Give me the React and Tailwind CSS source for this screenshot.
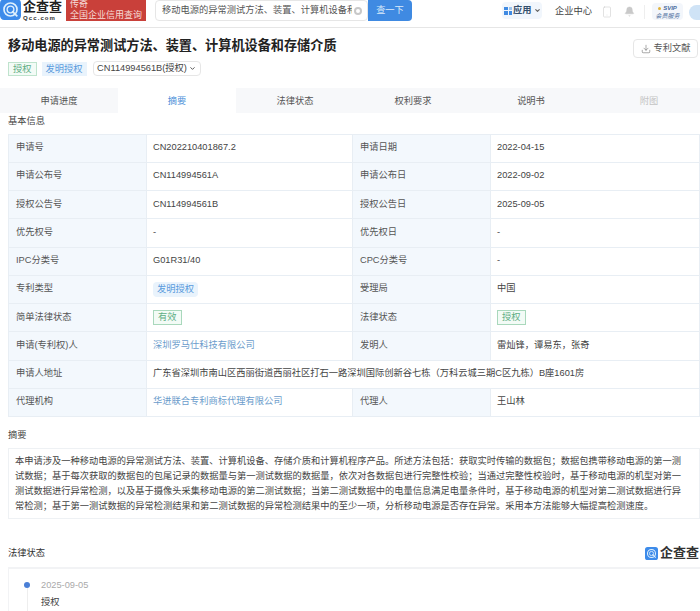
import { Download, Bell, Smartphone, ChevronDown } from "lucide-react";

const CJK = "font-['Liberation_Sans','Noto_Sans_CJK_SC',sans-serif]";

const rows = [
  ["申请号", "CN202210401867.2", "申请日期", "2022-04-15"],
  ["申请公布号", "CN114994561A", "申请公布日", "2022-09-02"],
  ["授权公告号", "CN114994561B", "授权公告日", "2025-09-05"],
  ["优先权号", "-", "优先权日", "-"],
  ["IPC分类号", "G01R31/40", "CPC分类号", "-"],
  ["专利类型", <BlueTag text="发明授权" />, "受理局", "中国"],
  ["简单法律状态", <GreenTag text="有效" />, "法律状态", <GreenTag text="授权" />],
  ["申请(专利权)人", <span className="text-[#6b9ccb]">深圳罗马仕科技有限公司</span>, "发明人", "雷灿锋，谭易东，张奇"],
];

function BlueTag({ text }) {
  return <span className="inline-block rounded-sm bg-[#e9f3fc] px-[4px] leading-[15px] text-[#5a9bdc]">{text}</span>;
}

function GreenTag({ text }) {
  return <span className="inline-block border border-[#a9d8bc] bg-[#f3fbf6] px-[4px] leading-[13px] text-[#5fae84]">{text}</span>;
}

function LogoMark({ size }) {
  return (
    <svg width={size} height={size} viewBox="0 0 20 20">
      <rect width="20" height="20" rx="4" fill="#3d8bea" />
      <circle cx="10" cy="10" r="6.2" fill="none" stroke="#dff0fd" strokeWidth="1.6" />
      <circle cx="10" cy="10" r="3.2" fill="none" stroke="#dff0fd" strokeWidth="1.3" />
      <path d="M11.5 11.5 L16.5 16.5" stroke="#dff0fd" strokeWidth="1.6" />
    </svg>
  );
}

function Label({ children }) {
  return <div className="flex items-center border-r border-b border-[#e8eef4] bg-[#f3f8fd] pl-[7px] text-[#555]">{children}</div>;
}

function Value({ children }) {
  return <div className="flex items-center border-r border-b border-[#e8eef4] pl-[6px] text-[#444]">{children}</div>;
}

const App = () => {
  return (
    <div className={`${CJK} h-[611px] w-[700px] overflow-hidden bg-white text-[9.25px] text-[#333]`}>
      {/* top bar, the page is scrolled a little so it is cut at the top */}
      <div className="flex h-[28px] items-start border-b border-[#e6e6e6]">
        <div className="-mt-[1px] shrink-0"><LogoMark size={21} /></div>
        <div className="ml-[2px] flex w-[42px] shrink-0 flex-col">
          <span className="h-[15px] text-[13px] leading-[14px] font-bold whitespace-nowrap text-[#222]">企查查</span>
          <span className="text-[6px] leading-[6px] font-bold tracking-[1.1px] whitespace-nowrap text-[#333]">Qcc.com</span>
        </div>
        <div className="ml-[1px] h-[21px] w-[80px] shrink-0 overflow-hidden bg-[#c9403a] pl-[4px] text-[9px] whitespace-nowrap text-[#f6dcd8]">
          <div className="h-[9px] leading-[8px]">传奇</div>
          <div className="text-[9px] leading-[13px]">全国企业信用查询</div>
        </div>
        <div className="ml-[9px] flex h-[21px] w-[213px] shrink-0 items-center rounded-sm border border-[#e6e6e6] pl-[6px]">
          <input readOnly value="移动电源的异常测试方法、装置、计算机设备和存储介质" className="w-[190px] text-[#555] outline-none" />
          <span className="ml-[2px] h-[8px] w-[8px] rounded-full border-2 border-[#c8c8c8] bg-white" />
        </div>
        <div className="flex h-[21px] w-[44px] shrink-0 items-center justify-center rounded-r-sm bg-[#3f8ae2] text-[#dbeafa]">查一下</div>
        <div className="mt-[2px] ml-[90px] flex h-[17px] w-[40px] shrink-0 items-center rounded-sm bg-[#f1f6fc] pl-[2px] font-bold whitespace-nowrap text-[#35506e]">
          <span className="grid h-[8px] w-[8px] shrink-0 grid-cols-2 gap-px">
            <i className="bg-[#3f8ae2]" /><i className="bg-[#9cc4ee]" /><i className="bg-[#3f8ae2]" /><i className="bg-[#3f8ae2]" />
          </span>
          <span className="ml-[1px]">应用</span>
          <ChevronDown size={7} strokeWidth={4} className="ml-[2px] text-[#666]" />
        </div>
        <span className="mt-[5px] ml-[13px] whitespace-nowrap text-[#444]">企业中心</span>
        <Smartphone size={12} strokeWidth={1} className="mt-[6px] ml-[9px] shrink-0 text-[#c4c4c4]" />
        <Bell size={11} fill="#c9c9c9" strokeWidth={1} className="mt-[6px] ml-[11px] shrink-0 text-[#c9c9c9]" />
        <span className="mt-[5px] ml-[9px] h-[14px] w-px shrink-0 bg-[#eee]" />
        <div className="mt-[3px] ml-[7px] h-[17px] w-[31px] shrink-0 rounded-sm bg-[#f3f6fb] pt-[1px] text-center text-[6px] leading-[8px] whitespace-nowrap text-[#4a6da0] italic">
          <div className="flex items-center justify-center font-bold">
            <span className="mr-[2px] h-[3px] w-[3px] rounded-full bg-[#e0b23c]" />
            SVIP
          </div>
          <div>会员服务</div>
        </div>
        <span className="mt-[5px] ml-[6px] h-[15px] w-[18px] shrink-0 rounded-full bg-[#cfe3f6]" />
      </div>

      {/* title */}
      <div className="flex h-[60px] items-start justify-between pr-[2px] pl-2">
        <div>
          <h1 className="mt-[8px] text-[13.15px] leading-[20px] font-bold text-[#222]">移动电源的异常测试方法、装置、计算机设备和存储介质</h1>
          <div className="mt-[5px] flex items-center">
            <span className="border border-[#bfe3cd] bg-[#f3fbf6] px-[4px] leading-[12px] text-[#5fae84]">授权</span>
            <span className="ml-[5px] bg-[#e9f3fc] px-[4px] leading-[14px] text-[#5a9bdc]">发明授权</span>
            <span className="ml-[6px] flex h-[15px] w-[108px] items-center justify-center rounded-sm border border-[#e6e6e6] whitespace-nowrap text-[#444]">
              CN114994561B(授权)
              <ChevronDown size={7} strokeWidth={3} className="ml-[2px] shrink-0" />
            </span>
          </div>
        </div>
        <div className="mt-[11px] flex h-[19px] w-[65px] items-center justify-center rounded-sm border border-[#e6e6e6] whitespace-nowrap text-[#555]">
          <Download size={10} strokeWidth={1.2} className="mr-[3px] shrink-0" />
          专利文献
        </div>
      </div>

      {/* tabs */}
      <div className="grid h-[25px] grid-cols-[repeat(6,118px)] bg-[#f7f8fa] text-center leading-[27px] text-[#555]">
        <div>申请进度</div>
        <div className="bg-white text-[#4a90d9]">摘要</div>
        <div>法律状态</div>
        <div>权利要求</div>
        <div>说明书</div>
        <div className="text-[#c4c4c4]">附图</div>
      </div>

      <div className="mt-[2px] pl-2 leading-[13px] text-[#444]">基本信息</div>

      {/* basic info table */}
      <div className="mt-[5.5px] ml-2 grid w-[692px] auto-rows-[28.25px] grid-cols-[138px_206px_138px_209px] border-t border-l border-[#e8eef4]">
        {rows.map((r) => (
          <div key={r[0]} className="contents">
            <Label>{r[0]}</Label>
            <Value>{r[1]}</Value>
            <Label>{r[2]}</Label>
            <Value>{r[3]}</Value>
          </div>
        ))}
        <Label>申请人地址</Label>
        <div className="col-span-3 flex items-center border-r border-b border-[#e8eef4] pl-[6px] text-[#444]">
          广东省深圳市南山区西丽街道西丽社区打石一路深圳国际创新谷七栋（万科云城三期C区九栋）B座1601房
        </div>
        <Label>代理机构</Label>
        <Value><span className="text-[#6b9ccb]">华进联合专利商标代理有限公司</span></Value>
        <Label>代理人</Label>
        <Value>王山林</Value>
      </div>

      {/* abstract */}
      <div className="mt-[11px] pl-2 leading-[14px] text-[#444]">摘要</div>
      <div className="mt-[6px] ml-2 h-[71px] w-[692px] border border-[#eef1f4] pt-[5px] pr-[10px] pl-[6px] leading-[15px] text-[#444]">
        本申请涉及一种移动电源的异常测试方法、装置、计算机设备、存储介质和计算机程序产品。所述方法包括：获取实时传输的数据包；数据包携带移动电源的第一测试数据；基于每次获取的数据包的包尾记录的数据量与第一测试数据的数据量，依次对各数据包进行完整性校验；当通过完整性校验时，基于移动电源的机型对第一测试数据进行异常检测，以及基于摄像头采集移动电源的第二测试数据；当第二测试数据中的电量信息满足电量条件时，基于移动电源的机型对第二测试数据进行异常检测；基于第一测试数据的异常检测结果和第二测试数据的异常检测结果中的至少一项，分析移动电源是否存在异常。采用本方法能够大幅提高检测速度。
      </div>

      {/* legal status */}
      <div className="mt-[26px] flex items-center justify-between pl-2">
        <span className="leading-[16px] text-[#333]">法律状态</span>
        <div className="flex items-center pr-px">
          <LogoMark size={13} />
          <span className="ml-[2px] text-[13px] leading-[16px] font-bold text-[#333]">企查查</span>
        </div>
      </div>
      <div className="mt-[6px] ml-2 flex h-[60px] w-[692px] border-t-2 border-l border-[#f2f3f5]">
        <div className="ml-[15px] flex flex-col items-center pt-[13px]">
          <span className="h-[6px] w-[6px] rounded-full bg-[#4a7fd6]" />
          <span className="w-px grow bg-[#eee]" />
        </div>
        <div className="ml-[11px] pt-[9px] leading-[15px]">
          <div className="text-[#aaa]">2025-09-05</div>
          <div className="mt-[2px] text-[#444]">授权</div>
        </div>
      </div>
    </div>
  );
};

export default App;
